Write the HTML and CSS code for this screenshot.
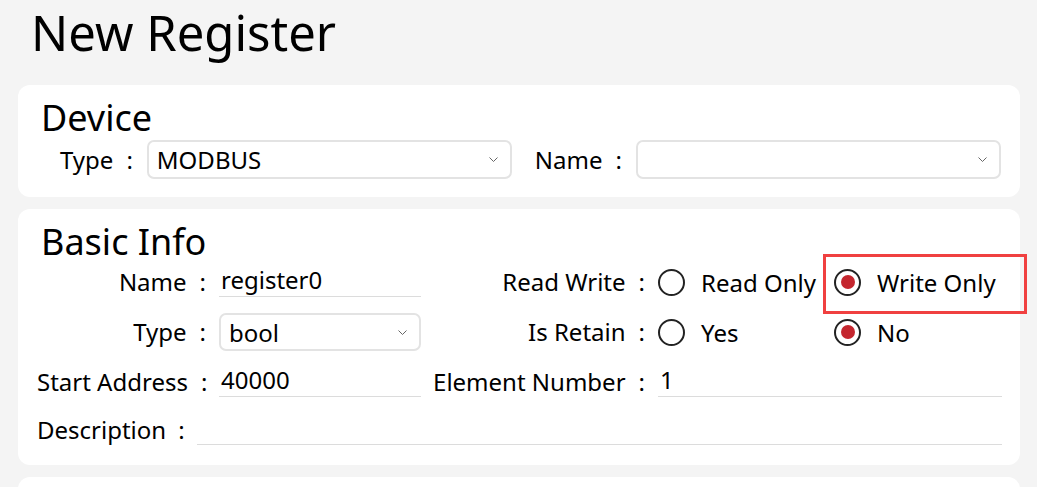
FILE: index.html
```html
<!DOCTYPE html>
<html>
<head>
<meta charset="utf-8">
<link rel="stylesheet" href="styles.css">
</head>
<body>
<h1 class="title">New Register</h1>

<section class="card card-device">
  <h2 class="card-title">Device</h2>
  <div class="device-row">
    <label class="dlabel">Type<span class="colon">:</span></label>
    <div class="select">
      <span class="select-value">MODBUS</span>
      <svg class="chev" width="9" height="5" viewBox="0 0 9 5"><polyline points="0.5,0.5 4.5,4.5 8.5,0.5" fill="none" stroke="#666" stroke-width="1"/></svg>
    </div>
    <label class="dlabel dlabel-name">Name<span class="colon">:</span></label>
    <div class="select">
      <span class="select-value"></span>
      <svg class="chev" width="9" height="5" viewBox="0 0 9 5"><polyline points="0.5,0.5 4.5,4.5 8.5,0.5" fill="none" stroke="#666" stroke-width="1"/></svg>
    </div>
  </div>
</section>

<section class="card card-basic">
  <h2 class="card-title">Basic Info</h2>
  <div class="grid">
    <label class="glabel">Name<span class="colon">:</span></label>
    <div class="input">register0</div>
    <label class="glabel">Read Write<span class="colon">:</span></label>
    <div class="radios">
      <div class="radio"><span class="circle"></span><span>Read Only</span></div>
      <div class="radio radio-marked"><span class="circle checked"></span><span>Write Only</span></div>
    </div>

    <label class="glabel">Type<span class="colon">:</span></label>
    <div class="select select-small">
      <span class="select-value">bool</span>
      <svg class="chev" width="9" height="5" viewBox="0 0 9 5"><polyline points="0.5,0.5 4.5,4.5 8.5,0.5" fill="none" stroke="#666" stroke-width="1"/></svg>
    </div>
    <label class="glabel">Is Retain<span class="colon">:</span></label>
    <div class="radios">
      <div class="radio"><span class="circle"></span><span>Yes</span></div>
      <div class="radio"><span class="circle checked"></span><span>No</span></div>
    </div>

    <label class="glabel">Start Address<span class="colon">:</span></label>
    <div class="input">40000</div>
    <label class="glabel">Element Number<span class="colon">:</span></label>
    <div class="input">1</div>
  </div>
  <div class="desc-row">
    <label class="glabel">Description<span class="colon">:</span></label>
    <div class="input input-wide"></div>
  </div>
</section>

<section class="card card-next"></section>
</body>
</html>
```
FILE: styles.css
```css
* { box-sizing: border-box; }
html, body { margin: 0; padding: 0; }
body {
  background: #f4f4f4;
  font-family: "Noto Sans", "Open Sans", sans-serif;
  color: #000;
  overflow: hidden;
  height: 487px;
}
.title {
  margin: 0;
  padding-left: 31px;
  font-size: 49px;
  font-weight: 400;
  line-height: 64px;
  height: 85px;
}
.card {
  background: #fff;
  border-radius: 12px;
  margin: 0 17px 12px 18px;
}
.card-title {
  margin: 0;
  font-size: 36px;
  font-weight: 400;
  line-height: 44px;
  padding-left: 23px;
}
.card-device {
  padding: 11px 19px 18px 0;
}
.device-row {
  display: flex;
  align-items: center;
  padding-left: 42px;
  font-size: 24px;
  height: 39px;
}
.dlabel { white-space: nowrap; }
.dlabel .colon { margin: 0 14px 0 13px; }
.dlabel-name { margin-left: 23px; }
.select {
  width: 365px;
  height: 39px;
  border: 2px solid #e3e3e3;
  border-radius: 7px;
  display: flex;
  align-items: center;
  justify-content: space-between;
  padding: 0 12px 0 8px;
}
.select-value { font-size: 24px; }
.chev { flex: none; }
.card-basic {
  padding: 11px 18px 16px 0;
}
.grid {
  display: grid;
  grid-template-columns: 174px 202px 221px minmax(0, 1fr);
  column-gap: 8px;
  row-gap: 12px;
  padding-left: 19px;
  margin-top: -1px;
  font-size: 24px;
}
.glabel {
  white-space: nowrap;
  text-align: right;
  height: 38px;
  line-height: 38px;
  padding-right: 5px;
}
.colon { margin-left: 13px; }
.input {
  height: 34px;
  line-height: 34px;
  border-bottom: 1px solid #dcdcdc;
  padding-left: 2px;
}
.select-small {
  width: 202px;
  height: 38px;
}
.radios {
  display: flex;
  align-items: center;
  height: 38px;
}
.radio {
  display: flex;
  align-items: center;
  width: 176px;
  gap: 16px;
  position: relative;
  height: 33px;
}
.radio:last-child { width: auto; }
.circle {
  width: 27px;
  height: 27px;
  border: 2px solid #222;
  border-radius: 50%;
  display: inline-flex;
  align-items: center;
  justify-content: center;
  flex: none;
}
.circle.checked::after {
  content: "";
  width: 14px;
  height: 14px;
  border-radius: 50%;
  background: #c4262e;
}
.radio-marked::after {
  content: "";
  position: absolute;
  left: -11px;
  top: -12px;
  width: 198px;
  height: 54px;
  border: 3px solid #f04040;
  pointer-events: none;
}
.desc-row {
  display: flex;
  margin-top: 10px;
  padding-left: 19px;
  font-size: 24px;
}
.desc-row .glabel { padding-right: 0; }
.desc-row .colon { margin-left: 12px; margin-right: 12px; }
.input-wide { flex: 1; }
.card-next {
  height: 60px;
  margin-bottom: 0;
}
```
